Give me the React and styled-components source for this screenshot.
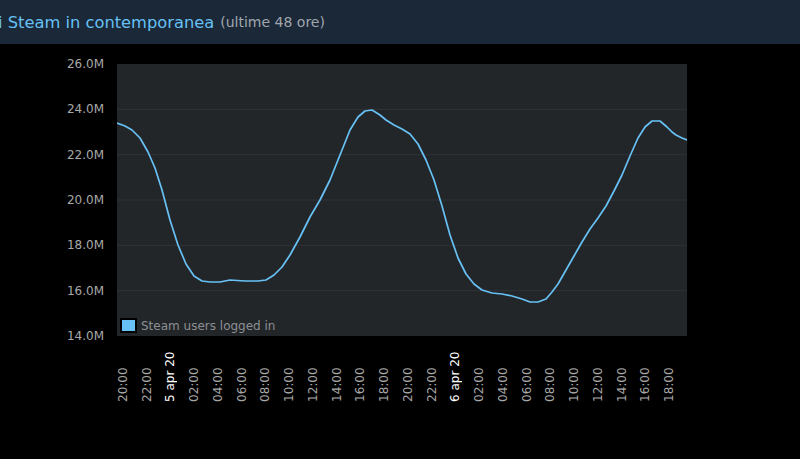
import React from "react";
import styled, { createGlobalStyle } from "styled-components";

const G = createGlobalStyle`
  body{margin:0;background:#000;font-family:"DejaVu Sans",sans-serif;overflow:hidden;}
`;
const Header = styled.div`
  height:44px;background:#1b2838;display:flex;align-items:center;white-space:nowrap;
`;
const Title = styled.span`color:#66c0f4;font-size:16.3px;margin-left:-2px;`;
const Sub = styled.span`color:#a0a6ad;font-size:14px;margin-left:6px;`;
const Body = styled.div`display:flex;padding-top:20px;`;
const YAxis = styled.div`
  width:117px;height:272px;display:flex;flex-direction:column;justify-content:space-between;
  align-items:flex-end;padding-right:13px;box-sizing:border-box;
`;
const YLab = styled.div`color:#a8a8a8;font-size:12px;height:0;line-height:0;`;
const Col = styled.div`display:flex;flex-direction:column;`;
const Plot = styled.div`width:570px;height:272px;background:#232629;position:relative;`;
const Legend = styled.div`
  position:absolute;left:3px;bottom:3px;display:flex;align-items:center;gap:4px;
  color:#8b8f93;font-size:12px;
`;
const Swatch = styled.span`width:13px;height:11px;background:#67c1f5;border:2px solid #000;`;
const XAxis = styled.div`display:flex;height:70px;margin-left:-6px;`;
const XCell = styled.div`width:23.75px;display:flex;justify-content:center;`;
const XLab = styled.div`
  writing-mode:vertical-rl;transform:rotate(180deg);font-size:12px;height:66px;
  text-align:left;color:${p => p.$d ? "#fff" : "#a8a8a8"};
  display:flex;align-items:center;
`;

const ys = ["26.0M","24.0M","22.0M","20.0M","18.0M","16.0M","14.0M"];
const xs = ["20:00","22:00","5 apr 20","02:00","04:00","06:00","08:00","10:00","12:00","14:00","16:00","18:00","20:00","22:00","6 apr 20","02:00","04:00","06:00","08:00","10:00","12:00","14:00","16:00","18:00"];
const pts = [[117,123],[125,126],[132,130],[140,138],[148,152],[155,168],[162,190],[170,220],[178,245],[186,264],[194,276],[202,281],[210,282],[220,282],[230,280],[245,281],[258,281],[266,280],[274,275],[282,267],[290,255],[300,237],[310,217],[320,200],[330,180],[340,155],[350,130],[358,117],[365,111],[372,110],[380,115],[386,120],[394,125],[402,129],[410,134],[418,144],[426,160],[434,180],[442,206],[450,235],[458,258],[466,274],[474,284],[482,290],[492,293],[502,294],[512,296],[522,299],[530,302],[538,302],[546,299],[552,292],[558,284],[566,270],[574,256],[582,242],[590,229],[598,218],[606,206],[614,191],[622,175],[630,156],[638,138],[645,127],[652,121],[660,121],[667,127],[672,132],[676,135],[682,138],[687,140]];

export default function App(){
  const d = pts.map(([x,y],i)=>`${i?"L":"M"}${x-117} ${y-64}`).join(" ");
  return (<>
    <G/>
    <Header><Title>i Steam in contemporanea</Title><Sub>(ultime 48 ore)</Sub></Header>
    <Body>
      <YAxis>{ys.map(y=><YLab key={y}>{y}</YLab>)}</YAxis>
      <Col>
        <Plot>
          <svg width="570" height="272" style={{position:"absolute",left:0,top:0}}>
            {[45.3,90.7,136,181.3,226.7].map(y=><line key={y} x1="0" x2="570" y1={y} y2={y} stroke="#2f3338" strokeWidth="1"/>)}
            <path d={d} fill="none" stroke="#67c1f5" strokeWidth="1.7" strokeLinejoin="round"/>
          </svg>
          <Legend><Swatch/>Steam users logged in</Legend>
        </Plot>
        <XAxis>{xs.map((x,i)=><XCell key={i}><XLab $d={x.includes("apr")}>{x}</XLab></XCell>)}</XAxis>
      </Col>
    </Body>
  </>);
}
